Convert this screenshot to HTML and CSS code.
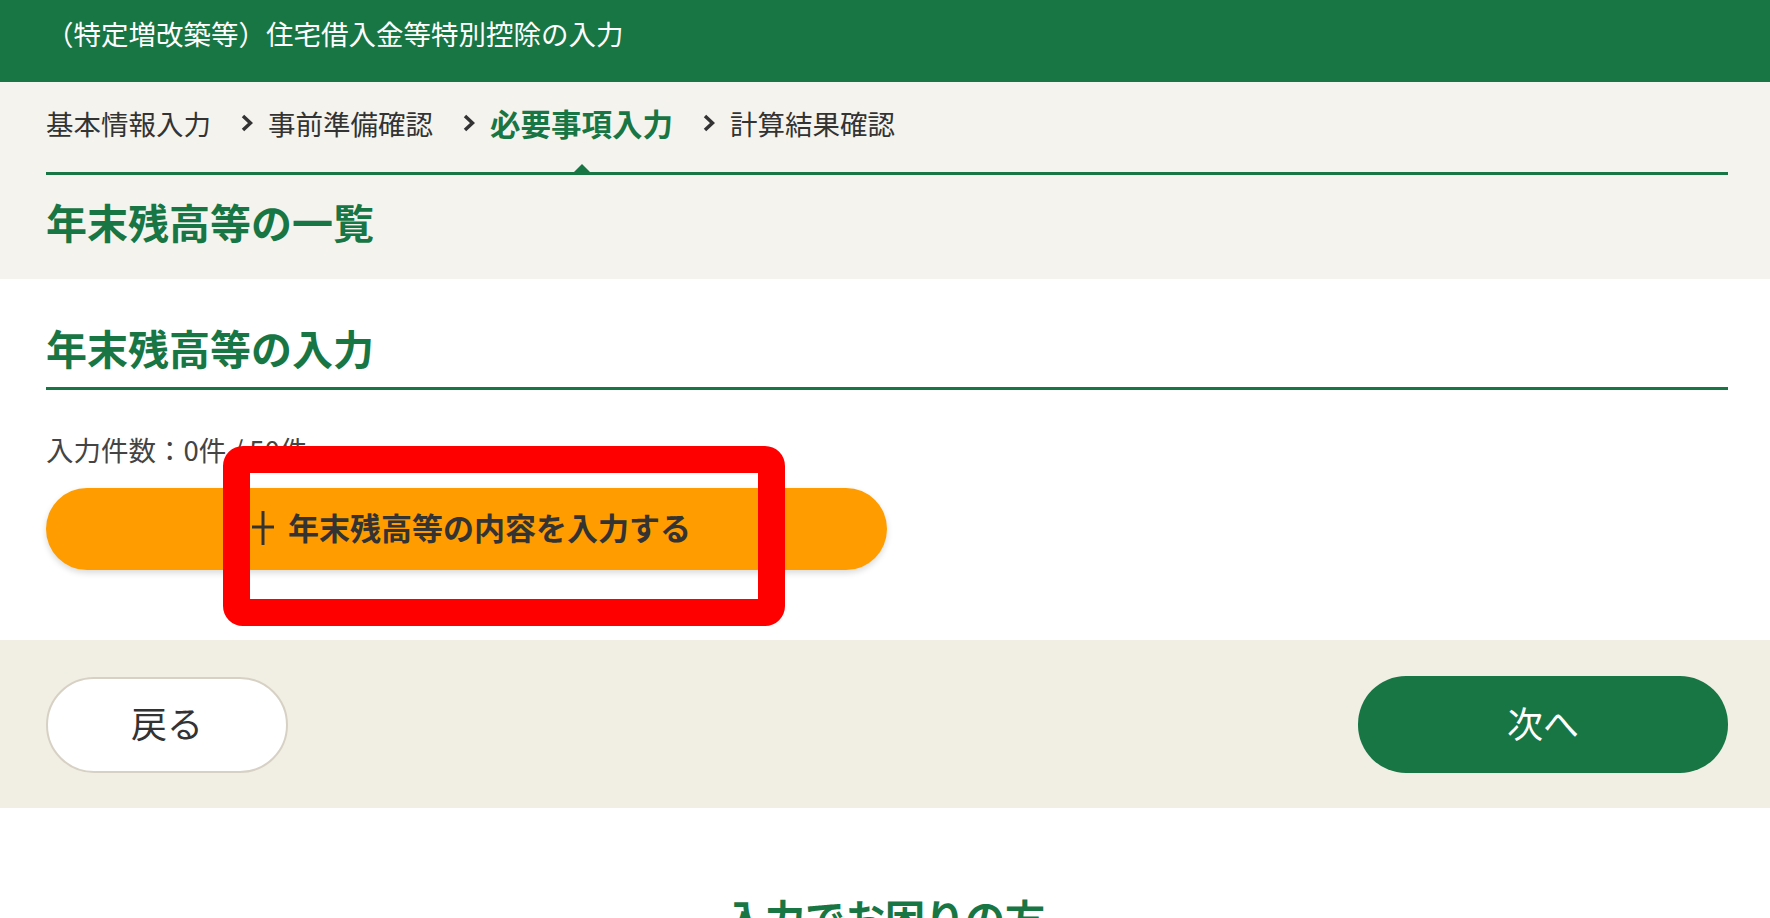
FILE: index.html
```html
<!DOCTYPE html>
<html lang="ja">
<head>
    <meta charset="UTF-8">
    <meta name="viewport" content="width=device-width, initial-scale=1.0">
    <title>住宅借入金等特別控除の入力</title>
    <link rel="stylesheet" href="styles.css">
</head>
<body>
    <header class="page-header">
        <h1 class="page-title">（特定増改築等）住宅借入金等特別控除の入力</h1>
    </header>

    <section class="step-area">
        <div class="inner">
            <ol class="steps">
                <li class="step">基本情報入力</li>
                <li class="step-sep"><svg width="12" height="18" viewBox="0 0 12 18"><polyline points="2,2 9.5,9 2,16" fill="none" stroke="#333" stroke-width="3.5"/></svg></li>
                <li class="step">事前準備確認</li>
                <li class="step-sep"><svg width="12" height="18" viewBox="0 0 12 18"><polyline points="2,2 9.5,9 2,16" fill="none" stroke="#333" stroke-width="3.5"/></svg></li>
                <li class="step current">必要事項入力</li>
                <li class="step-sep"><svg width="12" height="18" viewBox="0 0 12 18"><polyline points="2,2 9.5,9 2,16" fill="none" stroke="#333" stroke-width="3.5"/></svg></li>
                <li class="step">計算結果確認</li>
            </ol>
            <h2 class="list-title">年末残高等の一覧</h2>
        </div>
    </section>

    <main class="entry">
        <div class="inner">
            <h2 class="entry-title">年末残高等の入力</h2>
            <p class="count">入力件数：0件 / 50件</p>
            <button class="add-button">
                <svg class="plus" width="22" height="34" viewBox="0 0 22 34"><path d="M11 0V34M0 16H22" stroke="#333" stroke-width="3" fill="none"/></svg>
                <span class="add-label">年末残高等の内容を入力する</span>
            </button>
        </div>
        <div class="callout"></div>
    </main>

    <div class="nav-area">
        <div class="inner nav-buttons">
            <button class="back-button">戻る</button>
            <button class="next-button">次へ</button>
        </div>
    </div>

    <section class="help">
        <h2 class="help-title">入力でお困りの方</h2>
    </section>
</body>
</html>
```

FILE: styles.css
```css
body {
    margin: 0;
    background-color: #fff;
    font-family: "Noto Sans CJK JP", "Noto Sans", sans-serif;
    color: #333;
}

h1, h2, p, ol {
    margin: 0;
    padding: 0;
}

.inner {
    padding: 0 42px 0 46px;
}

.page-header {
    height: 82px;
    box-sizing: border-box;
    padding: 20px 46px 0;
    background-color: #187645;
}

.page-title {
    font-size: 27.5px;
    font-weight: normal;
    line-height: 1;
    color: #fff;
}

.step-area {
    background-color: #f5f3ee;
    padding-bottom: 37px;
}

.steps {
    list-style: none;
    display: flex;
    align-items: center;
    padding: 26px 0 33px;
    border-bottom: 3px solid #187645;
}

.step {
    font-size: 27.5px;
    line-height: 1;
    color: #333;
}

.step.current {
    position: relative;
    font-size: 30.5px;
    font-weight: bold;
    color: #187645;
}

.step.current::after {
    content: "";
    position: absolute;
    left: 50%;
    bottom: -33px;
    transform: translateX(-50%);
    border-left: 8px solid transparent;
    border-right: 8px solid transparent;
    border-bottom: 8px solid #187645;
}

.step-sep {
    display: flex;
    margin: 0 15px 0 30px;
}

.list-title {
    margin-top: 26px;
    font-size: 41px;
    line-height: 1;
    color: #187645;
}

.entry {
    position: relative;
    padding: 48px 0 70px;
}

.entry-title {
    font-size: 41px;
    line-height: 1;
    color: #187645;
    padding-bottom: 19px;
    border-bottom: 3px solid #187645;
}

.count {
    margin-top: 46px;
    font-size: 27.5px;
    line-height: 1;
    color: #444;
}

.add-button {
    display: flex;
    align-items: center;
    justify-content: center;
    gap: 14px;
    margin-top: 25px;
    width: 841px;
    height: 82px;
    border: none;
    border-radius: 41px;
    background-color: #fe9c00;
    box-shadow: 0 3px 6px rgba(0, 0, 0, 0.15);
    font-family: inherit;
    font-size: 31px;
    font-weight: bold;
    color: #333;
    padding: 0 0 6px 10px;
}

.plus {
    margin-top: 4px;
}

.add-label {
    line-height: 1;
}

.callout {
    position: absolute;
    left: 223px;
    top: 167px;
    width: 562px;
    height: 180px;
    box-sizing: border-box;
    border: 27px solid #ff0000;
    border-radius: 20px;
}

.nav-area {
    background-color: #f1eee4;
    padding: 36px 0 35px;
}

.nav-buttons {
    display: flex;
    justify-content: space-between;
    align-items: center;
}

.back-button {
    width: 242px;
    height: 96px;
    border: 2px solid #d7d1c5;
    border-radius: 48px;
    background-color: #fff;
    font-family: inherit;
    font-size: 36px;
    line-height: 1;
    color: #333;
    padding: 0 0 6px;
}

.next-button {
    width: 370px;
    height: 97px;
    border: none;
    border-radius: 48px;
    background-color: #187645;
    font-family: inherit;
    font-size: 36px;
    line-height: 1;
    color: #fff;
    padding: 0 0 6px;
}

.help {
    text-align: center;
    padding: 89px 0 60px;
}

.help-title {
    font-size: 40px;
    line-height: 1;
    color: #187645;
}
```
